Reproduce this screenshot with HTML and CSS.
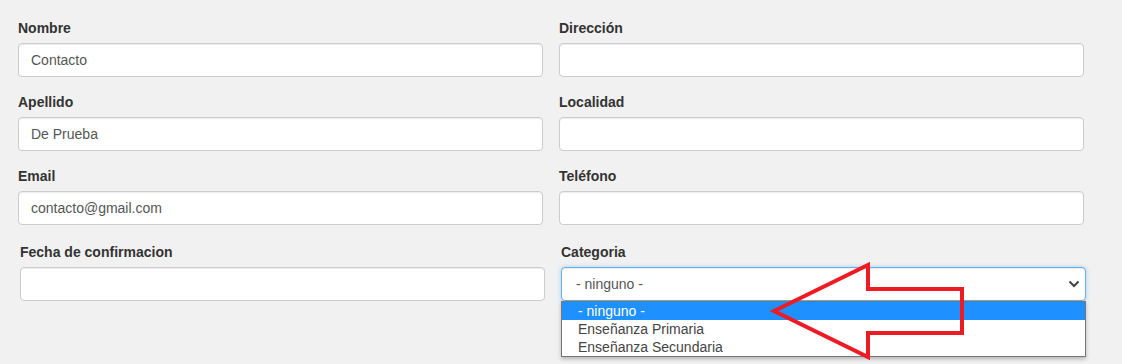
FILE: index.html
```html
<!DOCTYPE html>
<html lang="es">
<head>
    <meta charset="UTF-8">
    <meta name="viewport" content="width=device-width, initial-scale=1.0">
    <title>Contacto</title>
    <link rel="stylesheet" href="styles.css">
</head>
<body>
    <form class="contact-form">
        <div class="form-row">
            <div class="form-group">
                <label for="nombre">Nombre</label>
                <input class="form-control" id="nombre" type="text" value="Contacto">
            </div>
            <div class="form-group">
                <label for="direccion">Dirección</label>
                <input class="form-control" id="direccion" type="text">
            </div>
        </div>

        <div class="form-row">
            <div class="form-group">
                <label for="apellido">Apellido</label>
                <input class="form-control" id="apellido" type="text" value="De Prueba">
            </div>
            <div class="form-group">
                <label for="localidad">Localidad</label>
                <input class="form-control" id="localidad" type="text">
            </div>
        </div>

        <div class="form-row">
            <div class="form-group">
                <label for="email">Email</label>
                <input class="form-control" id="email" type="text" value="contacto@gmail.com">
            </div>
            <div class="form-group">
                <label for="telefono">Teléfono</label>
                <input class="form-control" id="telefono" type="text">
            </div>
        </div>

        <div class="form-row form-row-extra">
            <div class="form-group">
                <label for="fecha">Fecha de confirmacion</label>
                <input class="form-control" id="fecha" type="text">
            </div>
            <div class="form-group">
                <label for="categoria">Categoria</label>
                <div class="select-wrap">
                    <select class="form-control select-focus" id="categoria">
                        <option>- ninguno -</option>
                        <option>Enseñanza Primaria</option>
                        <option>Enseñanza Secundaria</option>
                    </select>
                    <svg class="select-chevron" width="12" height="8" viewBox="0 0 12 8">
                        <polyline points="1.5,1.5 6,6 10.5,1.5" fill="none" stroke="#444" stroke-width="2"/>
                    </svg>

                    <!-- open dropdown list -->
                    <ul class="select-list">
                        <li class="active">- ninguno -</li>
                        <li>Enseñanza Primaria</li>
                        <li>Enseñanza Secundaria</li>
                    </ul>

                    <!-- annotation arrow -->
                    <svg class="annotation-arrow" width="210" height="110" viewBox="0 0 210 110">
                        <polygon points="13,54 107,8 107,32 201,32 201,76 107,76 107,100"
                                 fill="none" stroke="#ed1c24" stroke-width="4" stroke-linejoin="miter"/>
                    </svg>
                </div>
            </div>
        </div>
    </form>
</body>
</html>
```

FILE: styles.css
```css
/* General */
html, body {
    min-height: 100vh;
}

body {
    margin: 0;
    background-color: #f1f1f1;
    font-family: "Liberation Sans", Arial, sans-serif;
    font-size: 14px;
    line-height: 20px;
    color: #333;
}

.contact-form {
    padding: 18px 0 0 18px;
}

.form-row {
    display: grid;
    grid-template-columns: 525px 525px;
    column-gap: 16px;
}

.form-row-extra {
    margin: 2px 0 0 2px;
}

.form-group {
    margin-bottom: 15px;
}

label {
    display: inline-block;
    font-weight: bold;
    margin-bottom: 5px;
}

/* Inputs */
.form-control {
    display: block;
    width: 100%;
    height: 34px;
    box-sizing: border-box;
    padding: 6px 12px;
    font-family: inherit;
    font-size: 14px;
    line-height: 20px;
    color: #555;
    background-color: #fff;
    border: 1px solid #ccc;
    border-radius: 4px;
    box-shadow: inset 0 1px 1px rgba(0, 0, 0, 0.075);
    outline: none;
}

/* Select */
.select-wrap {
    position: relative;
}

select.form-control {
    appearance: none;
    -webkit-appearance: none;
    padding-left: 14px;
}

.select-focus {
    border-color: #66afe9;
    box-shadow: inset 0 1px 1px rgba(0, 0, 0, 0.075), 0 0 4px rgba(102, 175, 233, 0.5);
}

.select-chevron {
    position: absolute;
    right: 6px;
    top: 13px;
}

.select-list {
    position: absolute;
    top: 34px;
    left: 0;
    width: 100%;
    box-sizing: border-box;
    margin: 0;
    padding: 0;
    list-style: none;
    background-color: #fff;
    border: 1px solid #767676;
    box-shadow: 0 2px 4px rgba(0, 0, 0, 0.25);
    color: #444;
}

.select-list li {
    height: 18px;
    line-height: 18px;
    padding-left: 16px;
}

.select-list li.active {
    background-color: #1e90ff;
    color: #fff;
}

.annotation-arrow {
    position: absolute;
    left: 200px;
    top: -10px;
}
```
